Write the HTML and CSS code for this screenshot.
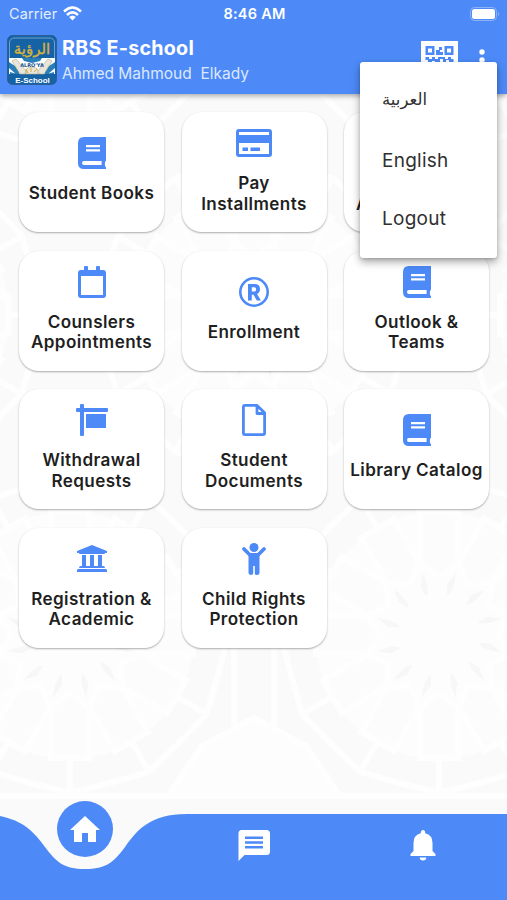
FILE: index.html
```html
<!DOCTYPE html>
<html lang="en">
<head>
<meta charset="utf-8">
<meta name="viewport" content="width=device-width, initial-scale=1">
<title>RBS E-school</title>
<link rel="stylesheet" href="styles.css">
</head>
<body>
<svg class="defs" aria-hidden="true">
  <symbol id="book" viewBox="0 0 28 32"><path fill="currentColor" fill-rule="evenodd" d="M6 0H28V23.500Q26.800 24.500 26.800 27T28 30.500V32H6Q0 32 0 26V6Q0 0 6 0ZM8 8V10.200H22V8ZM8 12.200V14.400H22V12.200ZM6 24Q4 24 4 26T6 28H23.600V24Z"/></symbol>
</svg>
<div class="phone">
  <header class="top">
    <div class="status">
      <div class="carrier">Carrier
        <svg width="19" height="15" viewBox="0 0 19 15"><g fill="none" stroke="#fff" stroke-width="2.500"><path d="M1 5.500Q9.500-2.500 18 5.500"/><path d="M4 9Q9.500 3.800 15 9"/></g><path fill="#fff" d="M6.200 11Q9.500 8 12.800 11L9.500 14.500Z"/></svg>
      </div>
      <div class="clock">8:46 AM</div>
      <svg class="battery" width="30" height="14" viewBox="0 0 30 14"><rect x=".5" y=".5" width="26" height="13" rx="4" fill="none" stroke="#8db3fb"/><rect x="2" y="2" width="23" height="10" rx="2.500" fill="#fff"/><path d="M28 4.500Q30 7 28 9.500Z" fill="#8db3fb"/></svg>
    </div>
    <div class="bar">
      <svg class="logo" width="50" height="50" viewBox="0 0 50 50">
        <rect x=".5" y=".5" width="49" height="49" rx="5" fill="#1563a5" stroke="#2d5e98"/>
        <path d="M2.500 24V8Q2.500 3 8 3H42Q47.500 3 47.500 8V24" fill="none" stroke="#6ea2cc"/>
        <path fill="#fff" d="M2 23H48V39H2Z"/>
        <path fill="#287fb8" d="M2 27 14 35 12 39H9L2 33ZM48 27 36 35 38 39H41L48 33ZM3 37 10 39H3ZM47 37 40 39H47ZM15 23H35L33 26 25 28 17 26Z"/>
        <path fill="#e8e6dc" stroke="#b6aa83" stroke-width=".6" d="M5 26 9 24 20 37 18 39H13ZM45 26 41 24 30 37 32 39H37ZM18 39Q18 32 25 32T32 39Z"/>
        <path d="M21 38 19 34M24 37V33M27 37 30 34" stroke="#d5ad36"/>
        <text x="25" y="18.500" class="logo-ar">الرؤية</text>
        <text x="25" y="32" class="logo-mid">ALRO'YA</text>
        <text x="25.500" y="47.500" class="logo-en">E-School</text>
      </svg>
      <div class="who"><h1>RBS E-school</h1><p>Ahmed Mahmoud&nbsp; Elkady</p></div>
      <svg class="qr" width="37" height="37" viewBox="0 0 37 37"><path fill="#fff" d="M0 0H37V37H0Z"/><path fill="#4d8af7" fill-rule="evenodd" d="M4.500 5H13.500V14H4.500ZM7 7.500V11.500H11V7.500ZM23.500 5H32.500V14H23.500ZM26 7.500V11.500H30V7.500ZM15 9H18V6H21V9H19V11H22V14H15ZM4.500 16H8V18H11V16H14V18H17V16H24V18H27V16H30V18H32.500V21H28V19H25V21H22V18H19V21H14V20H11V22H7V19H4.500ZM5 25H13V33H5ZM23 25H32V33H23Z"/></svg>
      <svg class="dots" width="6" height="22" viewBox="0 0 6 22"><g fill="#fff"><circle cx="3" cy="3" r="2.700"/><circle cx="3" cy="11" r="2.700"/><circle cx="3" cy="19" r="2.700"/></g></svg>
    </div>
    <nav class="menu"><a class="ar" lang="ar">العربية</a><a>English</a><a>Logout</a></nav>
  </header>

  <main class="content">
    <svg class="pattern" viewBox="0 94 507 806" aria-hidden="true">
      <defs>
        <g id="ray">
          <path fill="#fcfcfc" d="M0-58 19-72V-123H-19V-72Z"/>
          <path fill="#f7f7f7" stroke="none" d="M8-40Q15-43 17-62L8-51Z"/>
          <path fill="none" d="M0-58 19-72V-123H-19V-72ZM0-123V-158M0-158-40-148M0-158 40-148"/>
        </g>
        <g id="rosette">
          <circle r="124" fill="#fdfdfd" stroke="none"/>
          <use href="#ray"/><use href="#ray" transform="rotate(30)"/><use href="#ray" transform="rotate(60)"/><use href="#ray" transform="rotate(90)"/><use href="#ray" transform="rotate(120)"/><use href="#ray" transform="rotate(150)"/><use href="#ray" transform="rotate(180)"/><use href="#ray" transform="rotate(210)"/><use href="#ray" transform="rotate(240)"/><use href="#ray" transform="rotate(270)"/><use href="#ray" transform="rotate(300)"/><use href="#ray" transform="rotate(330)"/>
        </g>
      </defs>
      <g stroke="#fefefe" stroke-width="6">
        <use href="#rosette" x="70" y="635"/><use href="#rosette" x="439" y="635"/>
        <use href="#rosette" x="254" y="315"/><use href="#rosette" x="-115" y="315"/><use href="#rosette" x="623" y="315"/>
        <use href="#rosette" x="70" y="-5"/><use href="#rosette" x="439" y="-5"/>
        <path fill="#fdfdfd" d="M254 718 306 746 340 796H168L202 746Z"/>
        <path fill="none" d="M234 640V725M274 640V725M0 796H507"/>
      </g>
    </svg>
    <div class="grid">
      <a class="card"><svg width="28" height="32"><use href="#book"/></svg><span>Student Books</span></a>
      <a class="card"><svg width="36" height="32" viewBox="0 -2 36 32"><path fill="currentColor" fill-rule="evenodd" d="M3 0H33Q36 0 36 3V25Q36 28 33 28H3Q0 28 0 25V3Q0 0 3 0ZM3 3V6H33V3ZM3 14V25H33V14ZM6.500 18.500H12V22H6.500ZM14.500 18.500H24V22H14.500Z"/></svg><span>Pay<br>Installments</span></a>
      <a class="card covered"><span>A</span></a>
      <a class="card"><svg width="28" height="32" viewBox="0 0 28 32"><path fill="currentColor" fill-rule="evenodd" d="M6 4V1Q6 0 7 0H9Q10 0 10 1V4H18V1Q18 0 19 0H21Q22 0 22 1V4H25Q28 4 28 7V29Q28 32 25 32H3Q0 32 0 29V7Q0 4 3 4ZM3 10V29H25V10Z"/></svg><span>Counslers<br>Appointments</span></a>
      <a class="card"><svg width="30" height="32" viewBox="0 -1 30 32"><circle cx="15" cy="15" r="13.700" fill="none" stroke="currentColor" stroke-width="2.600"/><path fill="currentColor" fill-rule="evenodd" d="M9 7H15.500Q21 7 21 12 21 15.500 18 17L22 23.500H17.800L14.500 17.800H12.800V23.500H9ZM12.800 10.300V14.600H15Q17.200 14.600 17.200 12.400T15 10.300Z"/></svg><span>Enrollment</span></a>
      <a class="card"><svg width="28" height="32"><use href="#book"/></svg><span>Outlook &amp;<br>Teams</span></a>
      <a class="card"><svg width="32" height="32" viewBox="0 0 32 32"><path fill="currentColor" d="M4 4V1Q4 0 5 0H7Q8 0 8 1V4H31Q32 4 32 5V7Q32 8 31 8H8V31Q8 32 7 32H5Q4 32 4 31V8H1Q0 8 0 7V5Q0 4 1 4ZM10 10H30V24H10Z"/></svg><span>Withdrawal<br>Requests</span></a>
      <a class="card"><svg width="24" height="32" viewBox="0 0 24 32"><path fill="none" stroke="currentColor" stroke-width="2.800" stroke-linejoin="round" d="M3 1.400H15L22.600 8.800V29Q22.600 30.600 21 30.600H3Q1.400 30.600 1.400 29V3Q1.400 1.400 3 1.400ZM15 1.400V9.500H22.600"/></svg><span>Student<br>Documents</span></a>
      <a class="card"><svg width="28" height="32"><use href="#book"/></svg><span>Library Catalog</span></a>
      <a class="card"><svg width="30" height="32" viewBox="0 0 30 32"><path fill="currentColor" d="M15 2 30 8V10H28Q28 11 27 11H3Q2 11 2 10H0V8ZM5 12H9V23H13V12H17V23H21V12H25V23H26Q28 23 28 25H2Q2 23 4 23H5ZM1 26H29Q30 26 30 28V29H0V28Q0 26 1 26Z"/></svg><span>Registration &amp;<br>Academic</span></a>
      <a class="card"><svg width="24" height="32" viewBox="0 0 24 32"><circle cx="12" cy="4.500" r="4.500" fill="currentColor"/><path fill="none" stroke="currentColor" stroke-width="3.700" stroke-linecap="round" d="M2 6 8 12H16L22 6"/><path fill="currentColor" d="M6.500 10H17.500V30Q17.500 32 15 32T12.800 30V23H11.200V30Q11.200 32 9 32T6.500 30Z"/></svg><span>Child Rights<br>Protection</span></a>
    </div>
  </main>

  <footer class="bottom">
    <svg class="wave" viewBox="0 0 507 87" aria-hidden="true"><path fill="#4d8af7" d="M0 3C24 8 34 19 45 34C56 49 64 56 85 56S114 49 125 34C137 17 150 1 187 1H507V87H0Z"/></svg>
    <a class="home"><svg width="30" height="26" viewBox="0 0 30 26"><path fill="#fff" d="M15 0 30 14H26V26H18V17H12V26H4V14H0Z"/></svg></a>
    <a><svg width="32" height="32" viewBox="0 0 32 32"><path fill="#fff" fill-rule="evenodd" d="M3.500 0H28.500Q32 0 32 3.500V21.500Q32 25 28.500 25H6.500L.5 31V3.500Q.5 0 3.500 0ZM7 6.500V9H25V6.500ZM7 11.300V13.700H25V11.300ZM7 16V18.500H25V16Z"/></svg></a>
    <a><svg width="26" height="31" viewBox="0 0 26 31"><path fill="#fff" d="M13 0Q15.200 0 15.200 3.200 22.500 5 22.500 13V21L25.500 24V26H.5V24L3.500 21V13Q3.500 5 10.800 3.200 10.800 0 13 0ZM9.700 27.500H16.300Q16.300 30.500 13 30.500T9.700 27.500Z"/></svg></a>
  </footer>
</div>
</body>
</html>
```
FILE: styles.css
```css
* { box-sizing: border-box; }
body { margin: 0; font-family: Inter, "Liberation Sans", "DejaVu Sans", sans-serif; color: #1f1f1f; }
.defs { position: absolute; width: 0; height: 0; }
.phone { width: 507px; height: 900px; display: flex; flex-direction: column; overflow: hidden; position: relative; background: #fafafa; }
.top { height: 94px; flex: none; background: #4d8af7; color: #fff; box-shadow: 0 2px 5px rgba(0,0,0,.32); position: relative; z-index: 2; }
.status { height: 27px; display: grid; grid-template-columns: 1fr auto 1fr; align-items: center; padding: 0 7px 0 9px; }
.carrier { display: flex; align-items: center; gap: 6px; font-size: 14.5px; color: #e3edff; letter-spacing: .1px; }
.clock { font-size: 14.5px; font-weight: 600; letter-spacing: .25px; }
.battery { justify-self: end; }
.bar { display: flex; align-items: flex-start; padding: 8px 22px 0 7px; }
.logo { flex: none; }
.logo text { text-anchor: middle; font-family: "DejaVu Sans", sans-serif; }
.logo .logo-ar { font-size: 15px; fill: #d4b13f; stroke: #d4b13f; stroke-width: .4px; }
.logo .logo-mid { font-size: 5px; font-weight: 700; fill: #17518c; }
.logo .logo-en { font-family: "Liberation Sans", sans-serif; font-size: 8px; font-weight: 700; fill: #fff; }
.who { margin-left: 5px; padding-top: 1px; flex: 1; white-space: nowrap; }
.who h1 { margin: 0; font-size: 19.7px; line-height: 25px; font-weight: 700; letter-spacing: .25px; }
.who p { margin: 0; font-size: 15.5px; line-height: 26px; color: #dce8ff; letter-spacing: 0; }
.qr { margin-top: 6px; }
.dots { margin: 14px 0 0 21px; }
.menu { position: absolute; left: 360px; top: 62px; width: 137px; height: 196px; background: #fff; border-radius: 3px; box-shadow: 0 4px 8px rgba(0,0,0,.35), 0 1px 3px rgba(0,0,0,.15); display: flex; flex-direction: column; padding: 8px 22px 11px; }
.menu a { flex: 1; display: flex; align-items: center; color: #303030; font-size: 19px; letter-spacing: .25px; }
.menu .ar { font-family: "DejaVu Sans", sans-serif; font-size: 16.5px; letter-spacing: 0; padding-bottom: 3px; }
.content { flex: 1; position: relative; padding: 18px 18px 0 19px; }
.pattern { position: absolute; left: 0; top: 0; width: 507px; height: 806px; }
.grid { position: relative; display: grid; grid-template-columns: repeat(3, 145px); grid-auto-rows: 120px; column-gap: 17.5px; row-gap: 18.5px; }
.card { background: #fff; border-radius: 20px; box-shadow: 0 1px 2px rgba(0,0,0,.32); display: flex; flex-direction: column; align-items: center; justify-content: center; gap: 14px; padding-bottom: 3px; color: #4d8af7; }
.card span { color: #1f1f1f; font-size: 17.1px; font-weight: 600; line-height: 20.5px; letter-spacing: .4px; text-align: center; white-space: nowrap; }
.card.covered { align-items: flex-start; justify-content: flex-end; padding: 0 0 18px 12px; }
.bottom { height: 87px; flex: none; position: relative; display: grid; grid-template-columns: repeat(3, 169px); justify-items: center; align-items: start; padding-top: 17px; }
.wave { position: absolute; left: 0; top: 0; width: 507px; height: 87px; }
.bottom a { position: relative; display: flex; }
.bottom .home { width: 56px; height: 56px; margin-top: -29px; border-radius: 50%; background: #4d8af7; align-items: center; justify-content: center; }
```
